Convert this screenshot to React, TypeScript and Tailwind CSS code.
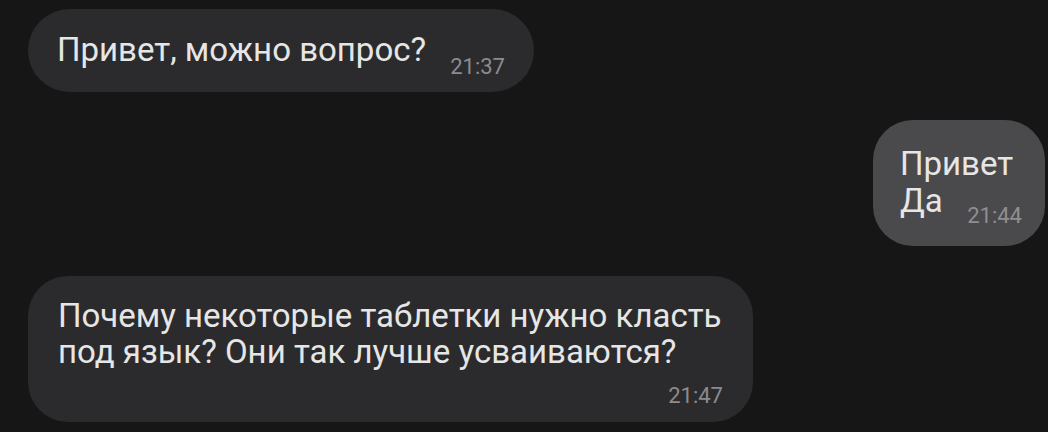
import React from 'react';

const font = { fontFamily: 'Roboto, "Noto Sans", sans-serif' };

export default function App() {
  return (
    <div className="w-[1048px] h-[432px] bg-[#161616] overflow-hidden text-[#e6e6e6]" style={font}>
      <div className="flex flex-col pl-[28px] pr-[3px] pt-[9px]">
        <div className="self-start flex h-[83px] w-[506px] rounded-full bg-[#2b2b2d] pl-[29px] pr-[29px] pt-[22px] pb-[14px]">
          <span className="text-[33px] leading-[38px]">Привет, можно вопрос?</span>
          <span className="ml-auto self-end text-[22px] leading-[22px] text-[#8b8b8d]">21:37</span>
        </div>

        <div className="self-end mt-[28px] flex flex-col h-[126px] w-[172px] rounded-[40px] bg-[#4a4a4c] pl-[27px] pr-[23px] pt-[25px]">
          <div className="text-[33px] leading-[37px]">Привет</div>
          <div className="flex items-end">
            <span className="text-[33px] leading-[37px]">Да</span>
            <span className="ml-auto mb-[-8px] text-[22px] leading-[22px] text-[#8f8f91]">21:44</span>
          </div>
        </div>

        <div className="self-start mt-[30px] h-[146px] w-[725px] rounded-[40px] bg-[#2b2b2d] pl-[30px] pr-[30px] pt-[22px]">
          <div className="text-[33px] leading-[36px]">
            Почему некоторые таблетки нужно класть
            <br />
            под язык? Они так лучше усваиваются?
          </div>
          <div className="text-right text-[22px] leading-[22px] mt-[15px] text-[#8b8b8d]">21:47</div>
        </div>
      </div>
    </div>
  );
}
